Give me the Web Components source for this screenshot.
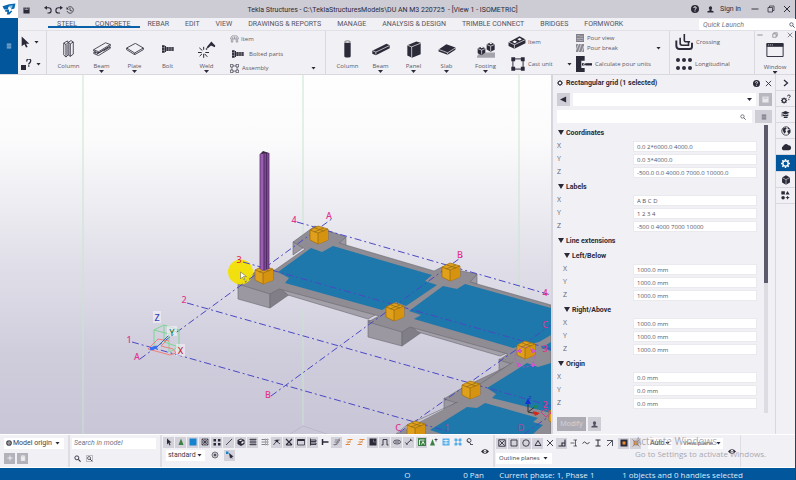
<!DOCTYPE html>
<html lang="en">
<head>
<meta charset="utf-8">
<title>Tekla Structures</title>
<style>
html,body{margin:0;height:100%}
body{font:6px/8px "Open Sans","Noto Sans",sans-serif;color:#45434f;--ink:#2b2a38;--blue:#02569c;--bar:#f1f0f5;--line:#d9d8df;--grey:#cfced6;--ui:"Roboto","Open Sans",sans-serif;background:var(--bar);overflow:hidden}
</style>
</head>
<body>
<app-window></app-window>
<script>
const ICONS = {
logo:['0 0 26 20','<path d="M1 5l12-4 12-1-2 9-6 2 1-6-6 1-1 5-7 0z" fill="#0a67ad"/><path d="M6 12l7-1v5l4-3 2 1-5 6H9l1-5H6z" fill="#0a67ad"/><path d="M13 4l7-1-1 4-4 1z" fill="#7fc4ea"/>'],
save:['0 0 16 16','<path d="M1 1h3v5h8V1h3v14H1z" fill="currentColor"/><path d="M9 1h2v4H9zM5 1h3v4H5z" fill="currentColor"/>'],
undo:['0 0 16 16','<path d="M4 3.500h5a5 5 0 010 10.500H7" fill="none" stroke="currentColor" stroke-width="2.200"/><path d="M0 3.500l6-4v8z" fill="currentColor"/>'],
redo:['0 0 16 16','<path d="M12 3.500H7a5 5 0 000 10.500h3" fill="none" stroke="currentColor" stroke-width="2.200"/><path d="M16 3.500l-6-4v8z" fill="currentColor"/>'],
clock:['0 0 16 16','<path d="M3 4a6.500 6.500 0 11-1 6M8 4v5l4 1" fill="none" stroke="currentColor" stroke-width="1.600"/><path d="M1 2v5h5z" fill="currentColor"/>'],
help:['0 0 16 16','<circle cx="8" cy="8" r="8" fill="currentColor"/><path d="M5.500 6a2.500 2.500 0 115 0c0 1.800-2.500 1.800-2.500 3.600M8 11v2" fill="none" stroke="#fff" stroke-width="1.800"/>'],
person:['0 0 16 16','<circle cx="8" cy="4.500" r="3.800" fill="currentColor"/><path d="M6 7h4v3l5 2v3H1v-3l5-2z" fill="currentColor"/>'],
min:['0 0 16 16','<path d="M1 8h14" stroke="currentColor" stroke-width="1.800"/>'],
restore:['0 0 16 16','<path d="M2 5h9v9H2zM5 5V2h9v9h-3" fill="none" stroke="currentColor" stroke-width="1.500"/>'],
close:['0 0 16 16','<path d="M2 2l12 12M14 2L2 14" stroke="currentColor" stroke-width="2"/>'],
search:['0 0 16 16','<circle cx="6.500" cy="6.500" r="4.500" fill="none" stroke="currentColor" stroke-width="2"/><path d="M10 10l5 5" stroke="currentColor" stroke-width="2.400"/>'],
searchbox:['0 0 16 16','<path d="M1 1h14v14H1z" fill="none" stroke="#77757f"/><circle cx="7" cy="7" r="3.500" fill="none" stroke="currentColor" stroke-width="1.500"/><path d="M9 9l5 5" stroke="currentColor" stroke-width="2"/>'],
lines:['0 0 16 16','<path d="M2 3h12M2 8h12M2 13h12" stroke="currentColor" stroke-width="1.800"/>'],
cursor:['0 0 16 22','<path d="M1 1l14 13H9l3 6-3 1-3-6-5 4z" fill="currentColor"/>'],
query:['0 0 22 22','<path d="M0 12h10v10H0z" fill="currentColor"/><path d="M12 5a3.800 3.800 0 117 0c0 3-3.500 2.500-3.500 6M15.500 12.500v3" fill="none" stroke="currentColor" stroke-width="2.600"/>'],
scolumn:['0 0 30 48','<path d="M2 8l6 4V46l-6-6zM8 12l6-6v34l-6 6M14 6l6 4v34l-6-4M20 10l8-5v33l-8 6M2 8l10-6 2 4M14 6l8-5 6 4" fill="none" stroke="currentColor" stroke-width="2.200"/><path d="M17 11v29M11 12v28" stroke="currentColor" stroke-width="1.300"/>'],
sbeam:['0 0 52 40','<path d="M2 22L36 2l14 5-34 21zM2 22v4l14 6v-4M16 32l34-21V7M7 28v5M12 30v5M2 33l14 6 34-21v-4L30 26M2 33v-3l6 1M11 35l34-21" fill="none" stroke="currentColor" stroke-width="2.300"/>'],
plate:['0 0 54 36','<path d="M2 15L28 1l24 14-26 15zM2 15v5l24 15 26-15v-5M26 30v5" fill="none" stroke="currentColor" stroke-width="2.500"/>'],
bolt:['0 0 36 24','<path d="M0 1h8v22H0zM9 3h3v18H9z" fill="currentColor"/><path d="M13 6h23v12H13z" fill="currentColor"/><path d="M19 6v12M24 6v12M29 6v12M34 6v12M0 8h8M0 16h8" stroke="#fff" stroke-width="1.200"/>'],
weld:['0 0 54 50','<path d="M26 18l14-17 12 13-2 4-11-5-10 9z" fill="currentColor"/><path d="M24 22l3 3" stroke="currentColor" stroke-width="4"/><path d="M17 17v9M4 20l9 8M0 34h11M5 45l7-7M17 50V38M28 47l-8-9M33 34H22" stroke="currentColor" stroke-width="3"/>'],
sitem:['0 0 26 22','<path d="M2 8l4-6h14l4 6v3H2zM4 12v8h4v-8M18 12v8h4v-8M8 5v6M13 4v7M18 5v6" fill="none" stroke="#8d8b96" stroke-width="2.200"/>'],
assembly:['0 0 24 24','<path d="M5 5h14v14H5z" fill="none" stroke="currentColor" stroke-width="1.500"/><path d="M1 1h7v7H1zM16 1h7v7h-7zM1 16h7v7H1zM16 16h7v7h-7z" fill="#f1f0f5" stroke="currentColor" stroke-width="1.700"/>'],
ccolumn:['0 0 22 54','<path d="M1 8h20v42a10 4 0 01-20 0z" fill="currentColor"/><ellipse cx="11" cy="5" rx="9.500" ry="3.500" fill="#fff" stroke="currentColor" stroke-width="2"/>'],
cbeam:['0 0 56 38','<path d="M1 23L45 1l10 5v9L12 37 1 32z" fill="currentColor"/><path d="M3 23l9 4 42-20M12 27v8" stroke="#fff" stroke-width="2" fill="none"/>'],
panel:['0 0 42 50','<path d="M1 12L28 1l13 4v34L15 50 1 43z" fill="currentColor"/><path d="M1 12l13 5L41 6M14 17v32" stroke="#fff" stroke-width="2" fill="none"/>'],
slab:['0 0 54 34','<path d="M1 17L25 1l28 10v7L29 33 1 23z" fill="currentColor"/><path d="M2 17l27 10 24-15M29 27v5" stroke="#fff" stroke-width="2" fill="none"/>'],
footing:['0 0 54 50','<path d="M0 45l8-11h46v16H0z" fill="#a5a3ac"/><path d="M2 21l12-5 11 5v13l-11 8-12-6z" fill="currentColor"/><path d="M29 9l12-6 12 6v17l-12 6-12-7z" fill="currentColor"/><path d="M2 22l12 5 11-5M14 27v13M29 10l12 5 12-5M41 15v15" stroke="#fff" stroke-width="2" fill="none"/><path d="M9 17l5-2 5 3-5 3zM36 5l5-2 5 3-5 3z" fill="#fff"/>'],
citem:['0 0 54 40','<path d="M1 19L35 1l18 10v11L19 39 1 31z" fill="currentColor"/><path d="M2 19l17 8 34-16M19 27v11" stroke="#fff" stroke-width="2" fill="none"/><path d="M13 18l7-4 7 4-7 4zM28 10l7-4 7 4-7 4z" fill="#fff"/>'],
cast:['0 0 44 44','<path d="M6 6h32v32H6z" fill="none" stroke="currentColor" stroke-width="3"/><path d="M1 1h12v12H1zM31 1h12v12H31zM1 31h12v12H1zM31 31h12v12H31z" fill="currentColor"/>'],
pourview:['0 0 24 24','<path d="M0 0h24v24H0z" fill="#7e7c87"/><path d="M2 6c6-4 12 4 20 0M2 13h20M2 19c7-3 12 3 20-1" stroke="#d5d4db" stroke-width="2" fill="none"/>'],
pourbreak:['0 0 24 24','<path d="M0 0h24v24H0z" fill="#8b8994"/><path d="M16 0L7 24M8 0L0 18M24 6l-7 18" stroke="#eee" stroke-width="2"/>'],
calc:['0 0 48 48','<path d="M0 0h26v14H16v22h10v12H0z" fill="currentColor"/><path d="M18 25h30" stroke="currentColor" stroke-width="7"/><path d="M31 19l-9 6 9 6" stroke="#f1f0f5" stroke-width="2" fill="none"/>'],
crossing:['0 0 54 50','<path d="M3 20v16q0 11 10 11h31q8 0 8-8V27" fill="none" stroke="currentColor" stroke-width="6"/><path d="M15 12v17q0 6 6 6h20V25M28 0v20q0 4 4 4h14" fill="none" stroke="currentColor" stroke-width="5"/>'],
longi:['0 0 48 36','<g fill="currentColor"><circle cx="6" cy="6" r="6"/><circle cx="24" cy="6" r="6"/><circle cx="42" cy="6" r="6"/><circle cx="6" cy="30" r="6"/><circle cx="24" cy="30" r="6"/><circle cx="42" cy="30" r="6"/></g>'],
window:['0 0 54 44','<path d="M1.500 1.500h51v41h-51z" fill="none" stroke="currentColor" stroke-width="3"/><path d="M1 1h52v11H1z" fill="currentColor"/><path d="M5 6h3M11 6h3M17 6h3" stroke="#fff" stroke-width="2.500"/>'],
gear:['0 0 24 24','<circle cx="12" cy="12" r="7" fill="none" stroke="currentColor" stroke-width="3.500"/><path d="M12 0v5M12 19v5M0 12h5M19 12h5M3.500 3.500L7 7M17 17l3.500 3.500M3.500 20.500L7 17M17 7l3.500-3.500" stroke="currentColor" stroke-width="4"/>'],
back:['0 0 16 16','<path d="M0 8l14-7v14z" fill="currentColor"/>'],
chevron:['0 0 16 16','<path d="M4 2l7 6-7 6" fill="none" stroke="currentColor" stroke-width="2.500"/>'],
gearq:['0 0 26 26','<circle cx="8" cy="17" r="5" fill="none" stroke="currentColor" stroke-width="3"/><path d="M8 9v3M8 22v3M0 17h3M13 17h3M2 11l3 3M11 20l3 3M2 23l3-3M11 14l3-3" stroke="currentColor" stroke-width="2.500"/><path d="M17 6a3.500 3.500 0 117 0c0 3-3.500 2.500-3.500 5M20.500 13v3" fill="none" stroke="currentColor" stroke-width="2.400"/>'],
learn:['0 0 26 22','<path d="M1 6l12-5 12 5-12 5z" fill="currentColor"/><path d="M5 10l8 3 8-3v5H5zM8 17h11v4H8z" fill="currentColor"/><path d="M3 7v10" stroke="currentColor" stroke-width="2"/>'],
globe:['0 0 26 26','<circle cx="13" cy="13" r="11" fill="none" stroke="currentColor" stroke-width="2"/><path d="M4 7l8-4 3 4-4 3 2 5-4 5-4-7zM16 13l7-4 1 7-5 5zM17 3l5 4-4 2z" fill="currentColor"/>'],
cloud:['0 0 28 20','<path d="M6 19a6 6 0 010-11 8 8 0 0114-3 7 7 0 012 14z" fill="currentColor"/>'],
cube:['0 0 26 28','<path d="M13 1l11 6v14l-11 6L2 21V7z" fill="currentColor"/><path d="M2 7l11 6 11-6M13 13v14" stroke="#eee" stroke-width="1.600" fill="none"/>'],
shapes:['0 0 28 28','<path d="M1 1h11v10H1zM20 0l7 11H14zM20.500 15l2 4 5 1.500-5 2-2 5-2-5-5-2 5-1.500z" fill="currentColor"/><circle cx="6.500" cy="21" r="5.500" fill="currentColor"/>'],
plus:['0 0 16 16','<path d="M8 1v14M1 8h14" stroke="#fff" stroke-width="2"/>'],
trash:['0 0 16 16','<path d="M3 4h10v11H3zM2 2h12M6 1h4" fill="#eee" stroke="#eee" stroke-width="1.500"/>'],
origin:['0 0 16 16','<circle cx="8" cy="8" r="7.500" fill="currentColor"/><path d="M8 2v12M4 6c2 2 2 3 0 5M12 5c-2 2-2 4 0 5" stroke="#fff" stroke-width="1.700" fill="none"/>'],
eye:['0 0 20 12','<path d="M0 6q10-11 20 0-10 11-20 0z" fill="currentColor"/><circle cx="10" cy="6" r="3.500" fill="#fff"/><circle cx="10" cy="6" r="1.500" fill="currentColor"/>'],
t1:['0 0 16 16','<path d="M4 1l9 8H9l2 5-2 1-2-5-3 3z" fill="currentColor"/>'],
t2:['0 0 16 16','<path d="M8 1l5 13H3z" fill="#3c7f45"/>'],
t3:['0 0 16 16','<path d="M1 1h14v14H1z" fill="#1583cf"/>'],
t4:['0 0 16 16','<path d="M2 2h12v12H2zM2 2l12 12M14 2L2 14M8 2v12M2 8h12" fill="none" stroke="currentColor" stroke-width="1.400"/>'],
t5:['0 0 16 16','<path d="M1 2h5v5H1zM10 2h5v5h-5zM1 10h5v5H1zM10 10h5v5h-5z" fill="currentColor"/>'],
t6:['0 0 16 16','<path d="M2 14L14 2" stroke="currentColor" stroke-width="1.600"/>'],
t7:['0 0 16 16','<path d="M8 1l7 3v8l-7 4-7-4V4z" fill="currentColor"/><path d="M9 8l4-2v4l-4 2zM3 5l5-2 3 1-4 2z" fill="#fff"/>'],
t8:['0 0 16 16','<path d="M1 3h14M1 8h14M1 13h14M4 1v14M8 1v14M12 1v14" stroke="currentColor" stroke-width="1.400"/>'],
t9:['0 0 16 16','<path d="M1 3h14M1 8h14M1 13h14" stroke="#77757f" stroke-width="1.800"/><path d="M9 1v14M13 1v14" stroke="#ee9a4d" stroke-width="2"/>'],
t10:['0 0 16 16','<path d="M1 14l6-8 7 6M3 5l10-1" fill="none" stroke="currentColor" stroke-width="1.600"/><circle cx="8" cy="6" r="2.500" fill="currentColor"/>'],
t11:['0 0 16 16','<path d="M2 2l12 12M14 2L2 14M3 14h10" stroke="currentColor" stroke-width="2.200"/>'],
t12:['0 0 16 16','<path d="M1 3h14v11H1z" fill="none" stroke="currentColor" stroke-width="1.500"/><path d="M1 2h14v4H1z" fill="currentColor"/>'],
t13:['0 0 16 16','<path d="M3 1v14M3 4h11v3H3zM3 10h11v3H3z" fill="none" stroke="currentColor" stroke-width="1.800"/>'],
t14:['0 0 16 16','<path d="M3 2v12M3 8h12" stroke="currentColor" stroke-width="3"/>'],
t15:['0 0 16 16','<path d="M4 4h10l-3 4H3M11 8l-3 5H1M13 1l-9 14" fill="none" stroke="#77757f" stroke-width="1.700"/>'],
t16:['0 0 16 16','<path d="M5 3h10M3 8h9M1 13h9" stroke="#ee8b32" stroke-width="2.200"/><path d="M13 2L3 14" stroke="#9c8a7c"/>'],
t18:['0 0 16 16','<path d="M1 1h14v14H1z" fill="currentColor"/><path d="M9 3v5h5" stroke="#aaa" fill="none"/>'],
t19:['0 0 16 16','<path d="M1 14h3V3h8v11h3" fill="none" stroke="currentColor" stroke-width="1.800"/>'],
t20:['0 0 16 16','<ellipse cx="8" cy="8" rx="7" ry="4" fill="none" stroke="currentColor" stroke-width="1.500"/><path d="M4 8h8" stroke="currentColor" stroke-width="1.500"/>'],
t21:['0 0 16 16','<path d="M1 9l4 5M3 12l9-8M10 2l5 4" fill="none" stroke="currentColor" stroke-width="1.800"/>'],
t22:['0 0 16 16','<path d="M0 0h16v16H0z" fill="#3c7f45"/><path d="M3 14V4h10M7 13l3-6 3 6" fill="none" stroke="#fff" stroke-width="1.700"/>'],
t23:['0 0 16 16','<path d="M5 2l5 13H0z" fill="#3c7f45"/><path d="M9 3h6M12 1v6" stroke="currentColor" stroke-width="1.600"/>'],
t24:['0 0 16 16','<path d="M1 1h14v14H1z" fill="#58aee8"/><path d="M3 5h10M3 10h10M8 3v10" stroke="#fff" stroke-width="1.500"/>'],
t25:['0 0 16 16','<path d="M4 4h8v8H4z" fill="none" stroke="#2a93dc" stroke-width="1.500"/><path d="M1 1h5v5H1zM10 1h5v5h-5zM1 10h5v5H1zM10 10h5v5h-5z" fill="#58aee8"/>'],
t26:['0 0 16 16','<circle cx="6" cy="5" r="4" fill="none" stroke="currentColor" stroke-width="1.500"/><path d="M2 5l8 7M8 13h6" stroke="currentColor" stroke-width="1.500"/>'],
ring:['0 0 16 16','<circle cx="8" cy="8" r="6" fill="#c4c3ca" stroke="#77757f" stroke-width="2"/><circle cx="8" cy="8" r="2.500" fill="#55535f"/>'],
snapcur:['0 0 16 16','<path d="M0 1h5v5H0z" fill="#1583cf"/><path d="M6 4l9 7-3 1 1 4-3-3-2 2z" fill="currentColor"/>'],
s1:['0 0 16 16','<path d="M1.500 1.500h13v13h-13zM3 3l10 10M13 3L3 13" fill="none" stroke="currentColor" stroke-width="1.700"/>'],
s2:['0 0 16 16','<path d="M2 2h12v12H2z" fill="none" stroke="currentColor" stroke-width="1.700"/>'],
s3:['0 0 16 16','<circle cx="8" cy="8" r="6.500" fill="none" stroke="currentColor" stroke-width="1.700"/>'],
s4:['0 0 16 16','<path d="M8 3l6 10H2z" fill="none" stroke="currentColor" stroke-width="1.800"/>'],
s5:['0 0 16 16','<path d="M2 2l12 12M14 2L2 14" stroke="currentColor" stroke-width="1.800"/>'],
s6:['0 0 16 16','<path d="M1 14h13V1M8 14V8h6" fill="none" stroke="currentColor" stroke-width="2.200"/>'],
s7:['0 0 16 16','<path d="M1 8h8M7 2h7M7 14h7M11 2v12" stroke="currentColor" stroke-width="1.400"/>'],
s8:['0 0 16 16','<path d="M1 9q4-6 7-1t7-2" fill="none" stroke="currentColor" stroke-width="1.700"/>'],
s9:['0 0 16 16','<path d="M3 2h10M3 14h10M8 2v12" stroke="currentColor" stroke-width="2"/>'],
s10:['0 0 16 16','<path d="M2 3h11v11M13 3L2 14" fill="none" stroke="currentColor" stroke-width="1.600"/>'],
s11:['0 0 16 16','<path d="M1 1h14v14H1z" fill="currentColor"/><path d="M5 5h6v6H5z" fill="#f08c2e"/>'],
s12:['0 0 16 16','<path d="M1 1l14 14M15 1L1 15" stroke="#a08b7c" stroke-width="2"/><path d="M4 4h8v8H4z" fill="#e98a35" stroke="#66646e"/>']
};

const esc = s => (s || '').replace(/&/g, '&amp;').replace(/"/g, '&quot;');
const BASE = `*{box-sizing:border-box}
button,input,select{font:inherit;color:inherit;border:0;margin:0;padding:0;background:none;border-radius:0;outline:0;min-width:0}
button{display:flex;align-items:center;justify-content:center}`;
function define(name, css, html) {
  customElements.define(name, class extends HTMLElement {
    connectedCallback() {
      if (this.shadowRoot) return;
      const t = document.createElement('template');
      t.innerHTML = `<style>${BASE}${css}</style>${html(this)}`;
      this.attachShadow({mode: 'open'}).append(t.content.cloneNode(true));
    }
  });
}
const icon = (n, w, h = w) => `<tk-icon name="${n}" style="--w:${w}px;--h:${h}px"></tk-icon>`;

define('tk-icon', `:host{display:block;flex:none;width:var(--w);height:var(--h)}svg{display:block;width:100%;height:100%}`,
  e => { const [vb, b] = ICONS[e.getAttribute('name')]; return `<svg viewBox="${vb}" aria-hidden="true">${b}</svg>`; });

define('menu-arrow', `:host{display:block;flex:none;width:5px;height:3px;background:var(--ink);clip-path:polygon(0 0,100% 0,50% 100%)}`, () => '');

define('tool-button', `:host{display:block}
button{width:100%;height:100%;flex-direction:column;justify-content:flex-start;padding-top:5px;color:var(--ink)}
.pic{height:26px;display:flex;align-items:center;justify-content:center}
.t{color:#5b5965;height:8px}`,
  e => `<button><span class="pic"><slot></slot></span><span class="t">${e.getAttribute('label')}</span>${e.hasAttribute('menu') ? '<menu-arrow></menu-arrow>' : ''}</button>`);

define('row-button', `:host{display:flex;align-items:center}
button{gap:var(--gap,3px);color:var(--ink)}.t{color:#5b5965;white-space:nowrap}`,
  e => `<button><slot></slot><span class="t">${e.getAttribute('label')}</span></button>`);

define('drop-down', `:host{display:flex;align-items:center;background:#fff;gap:1px;padding:0 3px}
select{appearance:none;flex:1;height:100%;width:100%;line-height:8px}`,
  e => `<slot></slot><select aria-label="${e.getAttribute('name')}"><option>${e.getAttribute('value') || ''}</option></select><menu-arrow></menu-arrow>`);

define('search-box', `:host{display:flex;align-items:center;background:#fff;padding:0 4px;font-family:var(--ui);font-size:7px}
input{flex:1;width:100%;height:100%}input::placeholder{color:#77757f;font-style:italic;opacity:1}`,
  e => `<input type="text" aria-label="${e.getAttribute('name')}" placeholder="${e.getAttribute('hint') || ''}"><slot></slot>`);

define('title-bar', `:host{display:flex;align-items:center;height:18px;background:#cdccd4;color:var(--ink);font-family:var(--ui);font-size:7px}
.logo{width:18px;height:18px;background:#fff;display:grid;place-items:center}
.quick,.right{display:flex;align-items:center}
.quick{gap:3px;padding-left:5px;width:228px;padding-top:2px}.quick button:first-child{margin-right:11px}
h1{flex:1;font-size:7px;font-weight:400;margin:0;padding-top:1px;text-align:center;white-space:pre}
.right{gap:8px;width:276px;justify-content:flex-end;padding-right:4px}.sign{margin-right:2px;gap:6px;display:flex}`,
  () => `<div class="logo">${icon('logo', 14, 12)}</div>
<div class="quick"><button aria-label="Save">${icon('save', 7)}</button><button aria-label="Undo">${icon('undo', 8)}</button><button aria-label="Redo">${icon('redo', 8)}</button><button aria-label="History">${icon('clock', 8)}</button></div>
<h1>Tekla Structures - C:\\TeklaStructuresModels\\DU AN M3 220725  - [View 1 - ISOMETRIC]</h1>
<div class="right"><button aria-label="Help">${icon('help', 8)}</button><button class="sign">${icon('person', 7)}<span>Sign in</span></button><button aria-label="Minimize">${icon('min', 8)}</button><button aria-label="Restore">${icon('restore', 8)}</button><button aria-label="Close">${icon('close', 8)}</button></div>`);

define('tab-strip', `:host{display:flex;height:12px;padding-left:30px}
button{padding:0 8px;white-space:nowrap;color:#55535f;border-bottom:2px solid transparent;border-top:2px solid transparent;font-family:var(--ui);font-size:7px}
.tabs{display:flex}.on{box-shadow:inset 0 -2px #0b61a8}
button:nth-child(-n+2){padding:0 9px}
search-box{margin-left:auto;width:100px;margin-top:1px}`,
  () => '<div class="tabs">' + ['STEEL','CONCRETE','REBAR','EDIT','VIEW','DRAWINGS &amp; REPORTS','MANAGE','ANALYSIS &amp; DESIGN','TRIMBLE CONNECT','BRIDGES','FORMWORK']
    .map((t, i) => `<button class="${i < 2 ? 'on' : ''}">${t}</button>`).join('') +
    `</div><search-box name="Quick Launch" hint="Quick Launch">${icon('search', 6)}</search-box>`);

define('ribbon-bar', `:host{display:grid;grid-template-columns:18px 1fr;height:57px;border-bottom:1px solid var(--line)}
.menu{background:var(--blue);color:#fff}
.groups{display:flex;height:44px;border-top:1px solid #e1e0e6}
.g{display:flex;border-right:1px solid var(--line)}
.sel{width:29px;display:grid;grid-template:22px 22px/auto;padding-left:3px}
.sel button{justify-content:flex-start;gap:4px;color:var(--ink)}
.steel{width:279px;padding-left:5px}.conc{width:344px;padding-left:5px}.reb{width:85px;padding-left:5px}.win{flex:1;flex-direction:column;align-items:center;border:0;padding-top:1px}
tool-button{width:33px}tool-button.w{width:45px}
.list{flex:1;display:grid;grid-template-rows:15px 15px 14px;padding-left:1px}
.line{display:flex;align-items:center;justify-content:space-between;padding-right:9px}
.two{display:grid;grid-template-rows:22px 22px}
.pour{display:grid;grid-template-rows:11px 10px 22px;padding:1px 8px 0 4px;flex:1}
.pour .line{padding:0}
.mdi{display:flex;justify-content:space-between;width:100%;padding:0 6px 0 2px;color:#66646e}
.win tool-button{width:40px;margin:-6px 4px 0 0;flex:1}`,
  () => `<button class="menu" aria-label="File menu">${icon('lines', 6)}</button>
<div><tab-strip></tab-strip><div class="groups">
<div class="g sel"><button aria-label="Select">${icon('cursor', 9, 12)}<menu-arrow></menu-arrow></button><button aria-label="Inquire">${icon('query', 11)}<menu-arrow></menu-arrow></button></div>
<div class="g steel"><tool-button label="Column">${icon('scolumn', 11, 18)}</tool-button><tool-button label="Beam" menu>${icon('sbeam', 18, 14)}</tool-button><tool-button label="Plate" menu>${icon('plate', 18, 12)}</tool-button><tool-button label="Bolt">${icon('bolt', 12, 8)}</tool-button><tool-button class="w" label="Weld" menu>${icon('weld', 18, 17)}</tool-button>
<div class="list"><row-button label="Item" style="--gap:2px">${icon('sitem', 9, 8)}</row-button><row-button label="Bolted parts" style="--gap:5px;padding-left:2px">${icon('bolt', 12, 8)}</row-button><div class="line"><row-button label="Assembly">${icon('assembly', 9)}</row-button><menu-arrow></menu-arrow></div></div></div>
<div class="g conc"><tool-button label="Column">${icon('ccolumn', 7, 18)}</tool-button><tool-button label="Beam" menu>${icon('cbeam', 18, 13)}</tool-button><tool-button label="Panel" menu>${icon('panel', 14, 17)}</tool-button><tool-button label="Slab" menu>${icon('slab', 18, 11)}</tool-button><tool-button class="w" label="Footing" menu>${icon('footing', 18, 17)}</tool-button>
<div class="two" style="width:64px"><row-button label="Item" style="--gap:2px">${icon('citem', 18, 13)}</row-button><div class="line" style="padding:0 0 0 3px"><row-button label="Cast unit">${icon('cast', 14)}</row-button><menu-arrow></menu-arrow></div></div>
<div class="pour"><row-button label="Pour view">${icon('pourview', 8)}</row-button><div class="line"><row-button label="Pour break">${icon('pourbreak', 8)}</row-button><menu-arrow></menu-arrow></div><row-button label="Calculate pour units">${icon('calc', 16)}</row-button></div></div>
<div class="g reb"><div class="two"><row-button label="Crossing">${icon('crossing', 18, 16)}</row-button><row-button label="Longitudinal" style="padding-left:1px">${icon('longi', 16, 12)}</row-button></div></div>
<div class="g win"><div class="mdi"><button aria-label="Minimize view">${icon('min', 6)}</button><button aria-label="Restore view">${icon('restore', 6)}</button><button aria-label="Close view">${icon('close', 6)}</button></div><tool-button label="Window" menu>${icon('window', 18, 14)}</tool-button></div>
</div></div>`);

define('model-view', `:host{display:block;flex:1;min-width:0;overflow:hidden;background:linear-gradient(#fefefe 0,#fbfbfc 18%,#e2e1ea 50%,#cfcddc 78%,#c9c6d7 100%);border-right:2px solid #d6d5dd}
svg{display:block;width:100%;height:100%}
text{font:500 9px "Noto Sans","Open Sans",sans-serif;fill:#e2338f;text-anchor:middle}
.grid line{stroke:#4a48c4;stroke-width:1;stroke-dasharray:7 3 2 3}
.blue{fill:#1e78ab}.top{fill:#8f8c93}.side{fill:#9b98a1}.front{fill:#817e88}.strip{fill:#a3a0aa}
.e{stroke:#6a6870;stroke-width:.6;stroke-linejoin:round}`,
  () => {
    const box = (x, y) => `<g transform="translate(${x} ${y})"><path d="M-9-5L-1-9l10 3V5L-1 9l-8-4z" fill="#e0a01c" stroke="#9b6c0d" stroke-width=".7"/><path d="M-1-2v11l10-4V-6z" fill="#d6930f"/><path d="M-9-5l8 3 10-4M-1-2V9M-5-3l10-4M-4-7l9 3" fill="none" stroke="#8f6812" stroke-width=".7"/></g>`;
    return `<svg viewBox="0 75 551 359" preserveAspectRatio="xMinYMin slice" role="img" aria-label="Isometric model view">
<path d="M83 75v359M303 75v165M303 310v115M519 75v255" stroke="#c6e6cf" stroke-width="1" fill="none"/>
<path d="M290 434l13-8 24 8" stroke="#b5b3c1" stroke-width=".7" fill="none"/>
<g class="e">
<path class="side" d="M293 242v13l20-14zM238 282v17l32 9v-16zM339 243l7-6v11zM470 282l7-8v10zM368 320v17l34 9v-16zM499 359v13l15-10zM444 398v13l14-10z"/>
<path class="front" d="M270 292v16l20-14-11-7zM402 330v16l20-14-12-7z"/>
<path class="strip" d="M279 287l98 27-9 5-80-24zM410 325l97 28-7 3-82-24z"/>
<path class="top" d="M293 242l22-16 31 11-7 6 95 28 8-4 35 7-7 8 81 23v130H396l61-32-13-4 18-11 50-24-13-4 9-6-98-27-8 5-34-10 11-6-100-27-9 5-32-10 20-14 17 0 30-21z"/>
</g>
<path class="top" d="M396 434l62-32 22-18 33-22 20 10-40 62z"/>
<path d="M396 434l11-9 51-23M480 384l33-22" stroke="#6a6870" stroke-width=".6" fill="none"/>
<g class="blue">
<path d="M278 272l33-24 11 4 11-6 99 29-7 6 12 4-31 21-10-4-14 8-97-27 4-5z"/>
<path d="M443 286l14 3 8-5 86 24v27l-12 7-26 6-99-29 7-4-12-4z"/>
<path d="M487 388l40-25 11 4 13-4v50l-59-15 4-4zM430 430l37-23 10 1 8-5 53 15-5 4 10 3-10 9h-91zM541 348l10-6v9z"/>
</g>
<circle cx="240.500" cy="272" r="12.500" fill="#f3e000" opacity=".94"/>
<g class="grid"><line x1="297" y1="222" x2="551" y2="295"/><line x1="243" y1="262" x2="551" y2="349"/><line x1="187" y1="303" x2="551" y2="406"/><line x1="132" y1="342" x2="450" y2="432"/>
<line x1="140" y1="359" x2="333" y2="218"/><line x1="271" y1="396" x2="463" y2="256"/><line x1="400" y1="432" x2="551" y2="325"/><line x1="524" y1="434" x2="551" y2="415"/></g>
${box(319, 235)}${box(264, 275)}${box(451, 272)}${box(395, 312)}${box(526, 350)}${box(471, 390)}${box(416, 430)}${box(558, 416)}
<path d="M260 154l2-1v-1l7 1v116l-5 2-4-2z" fill="#7e4796"/><path d="M260 154h4v116l-4-1z" fill="#9a5db0"/><path d="M264 154v116M266.500 153v116" stroke="#4f2d63" stroke-width="1"/><path d="M260 154v115M269 153v116" stroke="#56306a" stroke-width=".8"/><path d="M260 154l9-1-6-2z" fill="#3a2a44"/>
<path d="M240.500 272v7l2-2 1.500 3 1-.5-1.500-3h3z" fill="#fff" stroke="#555" stroke-width=".5"/>
<g fill="none"><path d="M154 330l10-5 15 5v16l-9 6M154 330v18M154 330l15 4v18M169 334l10-4M164 325v17l15 5" stroke="#7bd694"/><path d="M148 349l10-10 11 2M148 349l22 6 6-2-3-4-12-3 5-5" stroke="#ef8079"/><path d="M150 349l7-2" stroke="#3b6ef0" stroke-width="3"/><path d="M157 347l12-12" stroke="#3e6fb0"/></g>
<g fill="#f4f4f8" opacity=".6"><path d="M153 311h8v12h-8zM167 326h10v10h-10zM176 344h9v12h-9z"/></g>
<text x="157" y="321" style="fill:#3a3fb8">Z</text><text x="172" y="336" style="fill:#2b7f5a">Y</text><text x="180.500" y="354" style="fill:#bf1f3a">X</text>
<text x="329" y="219">A</text><text x="294" y="223">4</text><text x="239" y="263" style="fill:#e0303a">3</text><text x="184" y="303">2</text><text x="129" y="343">1</text><text x="137" y="360">A</text><text x="268" y="398">B</text><text x="460" y="258">B</text><text x="545" y="296">4</text><text x="545" y="328">C</text><text x="545" y="352">3</text><text x="545" y="408">2</text><text x="398" y="431">C</text><text x="447" y="431" opacity=".7">1</text><text x="521" y="431" opacity=".7">D</text>
<g fill="none" stroke="#c84fd8"><circle cx="525" cy="357" r="10" stroke-dasharray="2 2" stroke-width=".8"/><path d="M518 351l2 2 2-2-2-2zM531 351l2 2 2-2-2-2zM517 365l2 2 2-2-2-2zM531 365l2 2 2-2-2-2z" fill="#d65bb5"/></g>
<path d="M525 404l3-6 3 6z" fill="#1430d8"/><path d="M528 404v8l10 2M528 412l8-6" stroke="#333" fill="none"/><path d="M533 411l7 2-5 3z" fill="#d8261c"/><path d="M532 406l6-1-2 4z" fill="#1d8a52"/><path d="M541 412l5-3 5 4-5 4z" fill="none" stroke="#d13b8a"/>
<text x="530" y="399" style="font-size:6px;fill:#2038c8">z</text>
</svg>`;
  });

define('field-row', `:host{display:grid;grid-template-columns:1fr 124px;height:13px;align-items:start}
label{height:11px;line-height:11px;font-size:7px;color:#66646f}input{height:11px;background:#fff;border:1px solid #eae9ee;padding:0 3px;width:100%;margin-top:1px}`,
  e => `<label for="f">${e.getAttribute('label')}</label><input id="f" type="text" value="${esc(e.getAttribute('value'))}">`);

define('field-section', `:host{display:block}
button{height:15px;gap:2px;font-weight:700;color:var(--ink);padding-left:1px;font:700 7px/8px var(--ui)}
i{width:6px;height:5px;background:var(--ink);clip-path:polygon(0 0,100% 0,50% 100%)}`,
  e => `<button aria-expanded="true"><i></i>${e.getAttribute('name')}</button><slot></slot>`);

define('property-panel', `:host{display:flex;flex-direction:column;width:223px;background:var(--bar);padding:0 3px 3px 4px;border-right:1px solid var(--line);color:#55535f}
.h{display:flex;height:16px;align-items:center;gap:3px;color:var(--ink)}h2{flex:1;margin:0;font:700 7px/8px var(--ui)}
.h button:last-child{margin:0 0 0 2px}
.r{display:flex;gap:3px;align-items:stretch;height:13px;margin:2px 0}
.r button{width:13px;background:var(--grey);color:var(--ink)}
.r drop-down{flex:1;padding-right:4px}.r search-box{flex:1;padding-right:6px}
.r .save{background:#b9b8c0;color:#e9e8ed}.r .list{width:17px}
.body{flex:1;display:flex;gap:7px;min-height:0}
.f{flex:1;overflow:hidden}.track{width:4px;margin-right:4px;background:#dddce3}.track i{display:block;height:55%;background:#5c5a6b}
.sub{padding-left:6px;display:block}
.foot{display:flex;gap:2px;height:14px;margin-top:4px}.foot button{width:13px;background:var(--grey);color:#55535f}.foot .m{width:29px;background:#adacb4;color:#d6d5db;font-size:7px}`,
  () => {
    const rows = v => v.map((x, i) => `<field-row label="${'XYZ'[i]}" value="${x}"></field-row>`).join('');
    const mm = rows(Array(3).fill('1000.0 mm'));
    return `<div class="h">${icon('gear', 6)}<h2>Rectangular grid (1 selected)</h2><button aria-label="Help">${icon('help', 7)}</button><button aria-label="Close panel">${icon('close', 7)}</button></div>
<div class="r"><button aria-label="Back">${icon('back', 7)}</button><drop-down name="Preset"></drop-down><button class="save" aria-label="Save preset">${icon('save', 7)}</button></div>
<div class="r"><search-box name="Search properties">${icon('search', 6)}</search-box><button class="list" aria-label="List options">${icon('lines', 6)}</button></div>
<div class="body"><div class="f">
<field-section name="Coordinates">${rows(['0.0 2*6000.0 4000.0', '0.0 3*4000.0', '-500.0 0.0 4000.0 7000.0 10000.0'])}</field-section>
<field-section name="Labels">${rows(['A B C D', '1 2 3 4', '-500 0 4000 7000 10000'])}</field-section>
<field-section name="Line extensions"><field-section class="sub" name="Left/Below">${mm}</field-section><field-section class="sub" name="Right/Above">${mm}</field-section></field-section>
<field-section name="Origin">${rows(Array(3).fill('0.0 mm'))}</field-section>
</div><div class="track"><i></i></div></div>
<div class="foot"><button class="m" disabled>Modify</button><button aria-label="Apply to">${icon('person', 7)}</button></div>`;
  });

define('side-rail', `:host{display:flex;flex-direction:column;width:19px;background:var(--bar);color:var(--ink)}
button{height:16px;border-bottom:1px solid var(--line)}button:first-child{height:19px}button.on{background:var(--blue);color:#fff;height:17px}`,
  () => [['chevron', 8, 'Collapse'], ['gearq', 10, 'Inquire'], ['learn', 9, 'Learning'], ['globe', 10, 'Warehouse'], ['cloud', 10, 'Cloud'], ['gear', 9, 'Properties'], ['cube', 10, 'Components'], ['shapes', 9, 'Custom']]
    .map(([n, s, l]) => `<button class="${n === 'gear' ? 'on' : ''}" aria-label="${l}">${icon(n, s)}</button>`).join(''));

define('bottom-tools', `:host{display:flex;height:34px;background:var(--bar);border-top:1px solid #fff;border-bottom:1px solid #fff;position:relative}
.g{border-right:2px solid #dedde4;padding:2px 4px 0;display:flex;flex-direction:column;gap:3px}
.row{display:flex;gap:1px;align-items:center;height:12px}
.row button{width:11px;height:11px;color:var(--ink)}.row button.b{background:#d3d2da}
drop-down,search-box{height:11px;color:#3e3c48}.ui{font-family:var(--ui);font-size:7px}
.dis{background:#b3b2ba}
.eye{align-self:center;color:var(--ink)}
.wm{position:absolute;left:635px;top:-1px;color:#9d9ca6;opacity:.85;white-space:nowrap;pointer-events:none;font-size:8px;line-height:12px}
.wm b{display:block;font-weight:400;font-size:10px;line-height:14px}`,
  () => {
    const bt = (n, b, i = 7) => `<button class="${b ? 'b' : ''}" aria-label="Switch ${n}">${icon(n, i)}</button>`;
    const on = [1,2,3,4,5,6,7,8,10,11,12,13,15,18,19,20,21,22];
    let sw = '';
    for (let i = 1; i <= 26; i++) sw += (i === 22 ? '<span></span>' : '') + bt('t' + (i === 17 ? 16 : i), on.includes(i), 8);
    return `<div class="g" style="width:70px"><div class="row"><drop-down class="ui" name="Work plane" value="Model origin" style="flex:1;padding:0 4px 0 2px">${icon('origin', 6)}</drop-down></div><div class="row" style="gap:2px"><button class="dis" aria-label="Add">${icon('plus', 6)}</button><button class="dis" aria-label="Delete">${icon('trash', 6)}</button></div></div>
<div class="g" style="width:92px;padding-left:2px"><div class="row"><search-box name="Search in model" hint="Search in model" style="flex:1;padding-left:2px"></search-box></div><div class="row"><button aria-label="Search">${icon('search', 7)}</button><button aria-label="Search in area">${icon('searchbox', 7)}</button></div></div>
<div class="g" style="width:333px;flex-direction:row;padding:0 4px 0 1px"><div style="padding-top:1px;flex:1"><div class="row">${sw}</div><div class="row" style="padding-left:3px;margin-top:1px"><drop-down class="ui" name="Selection filter" value="standard" style="width:39px;padding:0 3px 0 2px"></drop-down><span style="width:2px"></span>${bt('ring', 0, 8)}<span style="width:2px"></span>${bt('snapcur', 1, 8)}</div></div><span class="eye">${icon('eye', 8, 5)}</span></div>
<div class="g" style="width:246px;flex-direction:row;gap:0;border-right-width:1px;padding:0 4px 0 1px"><div style="padding-top:2px;flex:1"><div class="row">${['s1','s2','s3','s4','s5','s6','s7','s8','s9','s10'].map((n, i) => bt(n, i < 4 || i === 5, 8)).join('')}<span style="width:1px"></span>${bt('s11', 1, 8)}${bt('s12', 1, 8)}<span style="width:5px"></span><drop-down class="ui" name="Snap depth" value="Auto" style="width:24px;padding:0 2px"></drop-down><span style="width:7px"></span><drop-down name="Plane type" value="View plane" style="width:42px;padding:0 2px"></drop-down></div><div class="row" style="margin-top:3px"><drop-down name="Outline planes" value="Outline planes" style="width:56px;padding:0 4px 0 3px"></drop-down></div></div><span class="eye">${icon('eye', 8, 5)}</span></div>
<div class="wm"><b>Activate Windows</b>Go to Settings to activate Windows.</div>`;
  });

define('status-bar', `:host{display:flex;justify-content:flex-end;align-items:center;height:12px;background:var(--blue);color:#dcebf7;font-size:8px;line-height:10px;padding:2px 52px 0 0;white-space:nowrap}
span{display:block}.o{width:59px}.p{width:36px;white-space:pre}.c{width:123px}`,
  () => `<span class="o">O</span><span class="p">0 Pan</span><span class="c">Current phase: 1, Phase 1</span><span>1 objects and 0 handles selected</span>`);

define('app-window', `:host{display:flex;flex-direction:column;height:100vh;border-right:1px solid #24415f;box-sizing:border-box}
main{flex:1;display:flex;min-height:0}`,
  () => `<title-bar></title-bar><ribbon-bar></ribbon-bar><main><model-view></model-view><property-panel></property-panel><side-rail></side-rail></main><bottom-tools></bottom-tools><status-bar></status-bar>`);
</script>
</body>
</html>
